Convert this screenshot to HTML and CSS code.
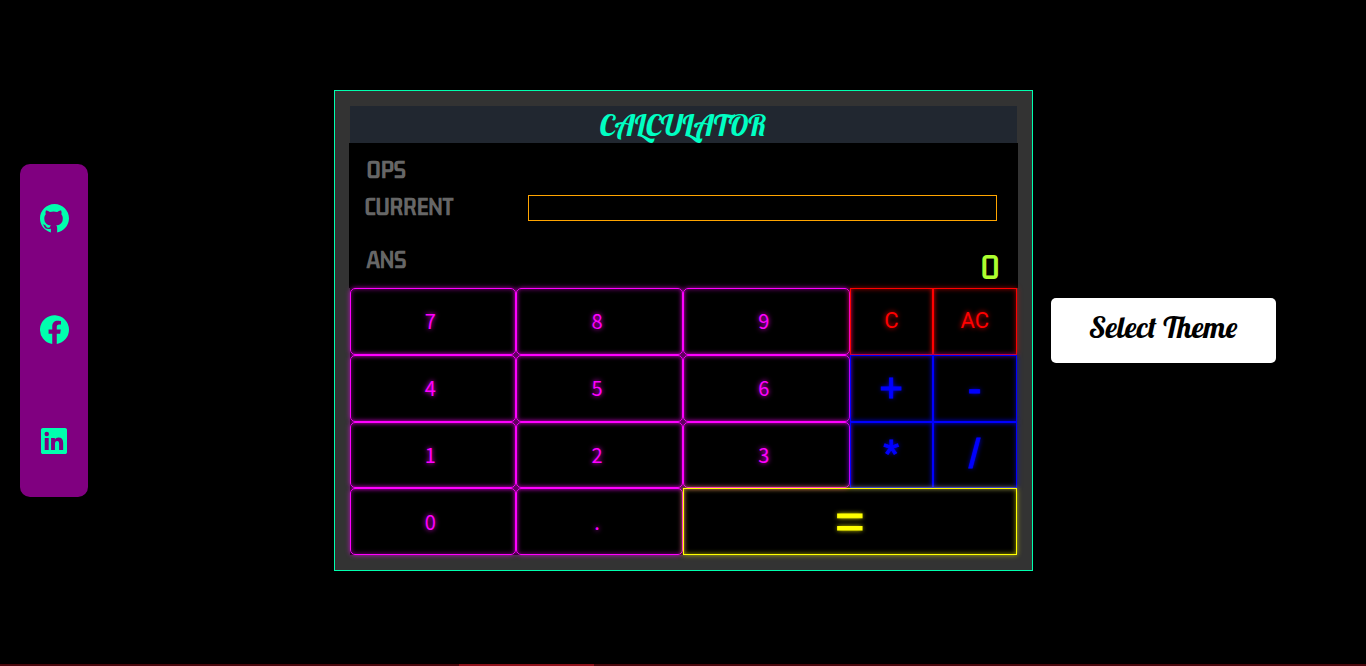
FILE: index.html
```
<!DOCTYPE html>
<html lang="en">
<head>
<meta charset="utf-8">
<title>Calculator</title>
<link rel="stylesheet" href="styles.css">
</head>
<body>
<div class="page">
  <nav class="social" aria-label="Social links">
    <a href="#github" aria-label="GitHub"><svg viewBox="0 0 16 16"><path d="M8 0C3.58 0 0 3.58 0 8c0 3.54 2.4 6.6 6 7.75V13.6c-2.3.5-3.2-.15-3.5-.75-.3-.7-.6-1.2-1-1.5.9-.2 1.5.4 1.9 1 .6.9 1.5.8 2.1.5.07-.52.28-.87.51-1.07-1.78-.2-3.64-.89-3.64-3.95 0-.87.31-1.59.82-2.15-.08-.2-.36-1.02.08-2.12 0 0 .67-.21 2.2.82a7.4 7.4 0 0 1 4 0c1.53-1.04 2.2-.82 2.2-.82.44 1.1.16 1.92.08 2.12.51.56.82 1.27.82 2.15 0 3.07-1.87 3.75-3.65 3.95.29.25.54.73.54 1.48v2.4A8 8 0 0 0 16 8c0-4.42-3.58-8-8-8z"/></svg></a>
    <a href="#facebook" aria-label="Facebook"><svg viewBox="0 0 16 16"><path d="M16 8.05A8 8 0 1 0 6.75 16v-5.62H4.72V8.05h2.03V6.28c0-2.02 1.2-3.13 3.02-3.13.88 0 1.79.16 1.79.16v1.98h-1.01c-.99 0-1.3.62-1.3 1.26v1.5h2.22l-.35 2.33H9.25V16A8 8 0 0 0 16 8.05z"/></svg></a>
    <a href="#linkedin" aria-label="LinkedIn"><svg class="square" viewBox="0 0 16 16"><path d="M0 1.15C0 .51.53 0 1.18 0h13.64C15.47 0 16 .51 16 1.15v13.7c0 .64-.53 1.15-1.18 1.15H1.18C.53 16 0 15.49 0 14.85zM4.74 13.6V6.1H2.3v7.5zM3.54 5.05a1.38 1.38 0 1 0 0-2.76 1.38 1.38 0 0 0 0 2.76zM8.6 13.6V9.7c0-1 .4-1.7 1.35-1.7.9 0 1.2.7 1.2 1.7v3.9h2.5V9.2c0-2.2-1.1-3.3-2.8-3.3-1.2 0-1.9.6-2.3 1.2V6.1H6.2v7.5z"/></svg></a>
  </nav>

  <main class="calculator">
    <h1 class="title">CALCULATOR</h1>
    <section class="screen">
      <div class="row ops"><span>OPS</span></div>
      <div class="row current"><label for="current">CURRENT</label><input id="current" type="text"></div>
      <div class="row answer"><span>ANS</span><output>0</output></div>
    </section>
    <div class="keys">
      <button class="num">7</button><button class="num">8</button><button class="num">9</button><button class="clear">C</button><button class="clear">AC</button>
      <button class="num">4</button><button class="num">5</button><button class="num">6</button><button class="op">+</button><button class="op">-</button>
      <button class="num">1</button><button class="num">2</button><button class="num">3</button><button class="op">*</button><button class="op">/</button>
      <button class="num">0</button><button class="num">.</button><button class="equals">=</button>
    </div>
  </main>

  <div class="side"><button class="theme">Select Theme</button></div>
</div>
<div class="strip"><span></span></div>
</body>
</html>
```
FILE: styles.css
```
* { box-sizing: border-box; }

body {
  margin: 0;
  min-height: 100vh;
  display: flex;
  flex-direction: column;
  background: #000;
  font-family: "Liberation Sans", sans-serif;
}

.page {
  flex: 1;
  display: grid;
  grid-template-columns: 1fr 699px 1fr;
  align-items: center;
  padding-bottom: 3px;
}

.social {
  width: 68px;
  margin-left: 20px;
  padding: 40px 0 42px;
  display: flex;
  flex-direction: column;
  align-items: center;
  gap: 82px;
  background: purple;
  border-radius: 10px;
}

.social a {
  width: 29px;
  height: 29px;
  display: grid;
  place-items: center;
}

.social svg {
  width: 29px;
  height: 29px;
  fill: #00ffae;
}

.social .square {
  width: 26px;
  height: 26px;
}

.calculator {
  padding: 15px 14px;
  background: #333;
  border: 1px solid #00ffae;
}

.title {
  height: 37px;
  margin: 0 1px;
  background: #212730;
  color: #00ffc3;
  font: 30px/38px "Lobster", "Liberation Serif", serif;
  text-align: center;
}

.screen {
  padding: 8px 17px 0 16px;
  background: #000;
  color: #666;
  font-family: "Kdam Thmor Pro", "Roboto", sans-serif;
  font-size: 20px;
  font-weight: bold;
}

.row {
  display: flex;
  justify-content: space-between;
  height: 38px;
  line-height: 40px;
}

.row span { padding-left: 2px; }

.current {
  align-items: center;
  padding-right: 4px;
}

.current input {
  width: 469px;
  height: 26px;
  padding: 0 4px;
  background: #000;
  border: 1px solid orange;
  color: orange;
  font: inherit;
}

.answer {
  height: 61px;
  padding-top: 14px;
}

.answer output {
  padding-top: 7px;
  color: greenyellow;
  font-size: 30px;
  font-weight: normal;
}

.keys {
  display: grid;
  grid-template-columns: repeat(3, 2fr) 1fr 1fr;
  grid-template-rows: repeat(4, 1fr);
  height: 267px;
  margin: 0 1px;
  background: #000;
}

.keys button {
  padding: 0;
  background: transparent;
  border: 1px solid;
  font-size: 20px;
}

.keys .num {
  padding: 0 5px 1px 0;
  border-radius: 5px;
  color: magenta;
  font-family: "Noto Sans CJK SC", sans-serif;
  text-shadow: 0 0 5px magenta;
  box-shadow: 0 0 5px rgba(255, 0, 255, .7), inset 0 0 5px rgba(255, 0, 255, .5);
}

.keys .clear {
  padding-bottom: 2px;
  color: red;
  font-family: "Roboto", sans-serif;
  font-size: 22px;
  text-shadow: 0 0 5px red;
  box-shadow: 0 0 5px rgba(255, 0, 0, .6), inset 0 0 5px rgba(255, 0, 0, .6);
}

.keys .op {
  color: blue;
  font-size: 40px;
  text-shadow: 0 0 5px blue;
  -webkit-text-stroke: 1px blue;
  box-shadow: 0 0 5px rgba(0, 0, 255, .6), inset 0 0 5px rgba(0, 0, 255, .6);
}

.keys .equals {
  grid-column: span 3;
  padding-bottom: 2px;
  color: yellow;
  font-size: 50px;
  text-shadow: 0 0 5px yellow;
  -webkit-text-stroke: 1px yellow;
  box-shadow: 0 0 5px rgba(255, 255, 0, .6), inset 0 0 5px rgba(255, 255, 0, .6);
}

.side { padding-left: 18px; }

.theme {
  width: 225px;
  height: 65px;
  padding: 0 0 8px;
  background: #fff;
  border: 0;
  border-radius: 5px;
  color: #000;
  font: 30px "Lobster", "Liberation Serif", serif;
}

.strip {
  height: 2px;
  background: #4b060c;
}

.strip span {
  display: block;
  width: 135px;
  height: 2px;
  margin-left: 459px;
  background: #90101a;
}
```
